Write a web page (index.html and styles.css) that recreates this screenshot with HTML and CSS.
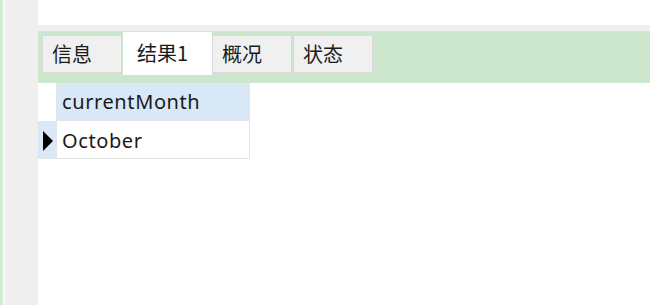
FILE: index.html
```html
<!DOCTYPE html>
<html>
<head>
<meta charset="utf-8">
<link rel="stylesheet" href="styles.css">
</head>
<body>
<div class="app">
  <div class="side">
    <div class="side-stripe"></div>
    <div class="side-gap"></div>
    <div class="side-panel"></div>
  </div>
  <div class="main">
    <div class="top"></div>
    <div class="band"></div>
    <div class="tabbar">
      <div class="tab">信息</div>
      <div class="tab active">结果1</div>
      <div class="tab">概况</div>
      <div class="tab">状态</div>
    </div>
    <div class="grid">
      <div class="row">
        <div class="ind"></div>
        <div class="cell head">currentMonth</div>
      </div>
      <div class="row">
        <div class="ind sel"><span class="arrow"></span></div>
        <div class="cell data">October</div>
      </div>
    </div>
  </div>
</div>
</body>
</html>
```

FILE: styles.css
```css
html, body {
  margin: 0;
  padding: 0;
  background: #ffffff;
}
.app {
  display: flex;
  width: 650px;
  height: 305px;
  overflow: hidden;
  font-family: "Noto Sans", "Noto Sans CJK SC", sans-serif;
  color: #1a1a1a;
}
.side {
  display: flex;
  width: 38px;
  flex: none;
}
.side-stripe {
  width: 3px;
  background: #d3ead3;
}
.side-gap {
  width: 2px;
  background: #f8f8f8;
}
.side-panel {
  flex: 1;
  background: #efefef;
}
.main {
  flex: 1;
  display: flex;
  flex-direction: column;
}
.top {
  height: 25px;
  background: #ffffff;
}
.band {
  height: 6px;
  background: #efefef;
}
.tabbar {
  height: 52px;
  background: #cde7cf;
  display: flex;
  align-items: flex-start;
  padding-left: 4px;
  box-sizing: border-box;
}
.tab {
  box-sizing: border-box;
  width: 80px;
  height: 38px;
  margin-top: 4px;
  margin-right: 1px;
  background: #f0f0f0;
  border: 1px solid #d9d9d9;
  font-family: "Noto Sans CJK SC", sans-serif;
  font-size: 20px;
  line-height: 36px;
  padding-left: 9px;
  color: #1a1a1a;
}
.tab.active {
  width: 89px;
  height: 43px;
  margin-top: 1px;
  margin-right: 0;
  background: #ffffff;
  border-color: #ffffff;
  padding-left: 13px;
  line-height: 40px;
}
.grid {
  display: flex;
  flex-direction: column;
}
.row {
  display: flex;
  height: 38px;
}
.ind {
  width: 19px;
  flex: none;
  background: #ffffff;
  border-right: 1px solid #e4e4e4;
  box-sizing: border-box;
  display: flex;
  align-items: center;
  justify-content: center;
}
.ind.sel {
  background: #d9e8f7;
  border-bottom: 1px solid #e4e4e4;
}
.arrow {
  width: 0;
  height: 0;
  border-top: 10px solid transparent;
  border-bottom: 10px solid transparent;
  border-left: 10px solid #000000;
  margin-left: 1px;
  margin-top: 3px;
}
.cell {
  box-sizing: border-box;
  width: 193px;
  padding-left: 5px;
  font-size: 20px;
  letter-spacing: 0.6px;
  line-height: 37px;
  border-right: 1px solid #e4e4e4;
  border-bottom: 1px solid #e4e4e4;
}
.cell.head {
  background: #d9e8f7;
}
.cell.data {
  background: #ffffff;
  line-height: 39px;
}
```
